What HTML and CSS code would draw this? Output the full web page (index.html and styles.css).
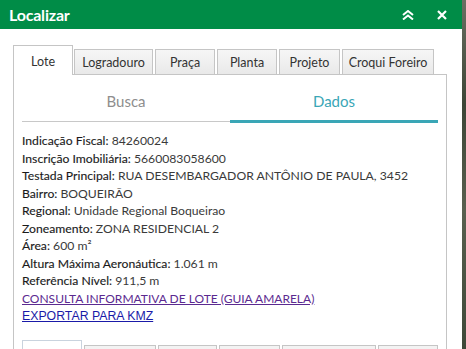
FILE: index.html
```html
<!DOCTYPE html>
<html lang="pt">
<head>
<meta charset="utf-8">
<title>Localizar</title>
<link rel="stylesheet" href="styles.css">
</head>
<body>
<div class="map-edge"></div>
<div class="panel">
  <div class="header">
    <span class="title">Localizar</span>
    <span class="actions">
      <svg class="icon" width="14" height="10" viewBox="0 0 14 10"><path d="M2 5 L7 1 L12 5 M2 9.5 L7 5.5 L12 9.5" fill="none" stroke="#fff" stroke-width="2"/></svg>
      <svg class="icon close" width="10" height="10" viewBox="0 0 10 10"><path d="M1 1 L9 9 M9 1 L1 9" fill="none" stroke="#fff" stroke-width="2.2"/></svg>
    </span>
  </div>
  <div class="body">
    <div class="tabs">
      <div class="tab active">Lote</div>
      <div class="tab w-log">Logradouro</div>
      <div class="tab w-praca">Praça</div>
      <div class="tab w-planta">Planta</div>
      <div class="tab w-proj">Projeto</div>
      <div class="tab w-croqui">Croqui Foreiro</div>
    </div>
    <div class="tab-content">
      <div class="subtabs">
        <div class="subtab">Busca</div>
        <div class="subtab selected">Dados</div>
      </div>
      <div class="data">
        <div class="row"><span class="lbl">Indicação Fiscal:</span> 84260024</div>
        <div class="row"><span class="lbl">Inscrição Imobiliária:</span> 5660083058600</div>
        <div class="row"><span class="lbl">Testada Principal:</span> RUA DESEMBARGADOR ANTÔNIO DE PAULA, 3452</div>
        <div class="row"><span class="lbl">Bairro:</span> BOQUEIRÃO</div>
        <div class="row"><span class="lbl">Regional:</span> Unidade Regional Boqueirao</div>
        <div class="row"><span class="lbl">Zoneamento:</span> ZONA RESIDENCIAL 2</div>
        <div class="row"><span class="lbl">Área:</span> 600 m²</div>
        <div class="row"><span class="lbl">Altura Máxima Aeronáutica:</span> 1.061 m</div>
        <div class="row"><span class="lbl">Referência Nível:</span> 911,5 m</div>
        <div class="row"><a class="link visited" href="#">CONSULTA INFORMATIVA DE LOTE (GUIA AMARELA)</a></div>
        <div class="row"><a class="link kmz" href="#">EXPORTAR PARA KMZ</a></div>
      </div>
      <div class="tabs2">
        <div class="t2 active"></div>
        <div class="t2 b1"></div>
        <div class="t2 b2"></div>
        <div class="t2 b3"></div>
        <div class="t2 b4"></div>
        <div class="t2 b5"></div>
      </div>
    </div>
  </div>
</div>
</body>
</html>
```
FILE: styles.css
```css
html, body {
  margin: 0;
  padding: 0;
  height: 100%;
  overflow: hidden;
}
body {
  background: #4b5243;
  font-family: Lato, "Open Sans", sans-serif;
  position: relative;
}
.map-edge {
  position: absolute;
  right: 0;
  top: 0;
  width: 4px;
  height: 100%;
  background: linear-gradient(#6b6f62, #3d4536 30%, #59604f 60%, #3e4838);
}
.panel {
  width: 462px;
  height: 349px;
  background: #fff;
  overflow: hidden;
}
.header {
  height: 29px;
  background: #008c47;
  display: flex;
  align-items: center;
  justify-content: space-between;
  padding: 0 15px 0 9px;
}
.title {
  color: #fff;
  font-weight: 700;
  font-size: 16px;
  letter-spacing: -0.2px;
}
.actions {
  display: flex;
  align-items: center;
  gap: 22px;
}
.icon { display: block; }
.body {
  padding: 16px 15px 0 13px;
}
.tabs {
  display: flex;
  align-items: flex-end;
  gap: 2px;
  height: 29px;
  position: relative;
  z-index: 1;
}
.tab {
  box-sizing: border-box;
  height: 25px;
  border: 1px solid #c5c5c5;
  border-bottom: none;
  background: linear-gradient(#f6f6f6, #e9e9e9);
  font-size: 12.5px;
  color: #333;
  display: flex;
  align-items: center;
  justify-content: center;
}
.tab.active {
  width: 60px;
  height: 30px;
  background: #fff;
  border-color: #c5c5c5;
  margin-right: -1px;
  margin-bottom: -1px;
  padding-top: 2px;
}
.w-log { width: 79px; }
.w-praca { width: 60px; }
.w-planta { width: 60px; }
.w-proj { width: 61px; }
.w-croqui { width: 92px; }
.tab-content {
  border: 1px solid #c5c5c5;
  border-bottom: none;
  padding: 0 8px;
  height: 300px;
}
.subtabs {
  display: flex;
  padding-top: 16px;
}
.subtab {
  flex: 1;
  text-align: center;
  font-size: 15px;
  color: #8e8e8e;
  line-height: 20px;
  padding-bottom: 10px;
  border-bottom: 1px solid #c8c8c8;
  margin-bottom: 1px;
}
.subtab.selected {
  color: #3aa6b6;
  border-bottom: 3px solid #3aa6b6;
  margin-bottom: 0;
  padding-bottom: 9px;
}
.data {
  padding-top: 9px;
}
.row {
  font-size: 12.2px;
  line-height: 17.5px;
  color: #3a3a3a;
  white-space: nowrap;
}
.lbl {
  color: #1a1a1a;
  -webkit-text-stroke: 0.12px #1a1a1a;
}
.link {
  font-size: 12px;
}
.link.visited { color: #5b2a90; }
.link.kmz {
  color: #1a1aa8;
  font-family: "Liberation Sans", Arial, sans-serif;
  font-size: 12.3px;
}
.tabs2 {
  display: flex;
  align-items: flex-end;
  gap: 2px;
  margin-top: 14px;
  height: 10px;
}
.t2 {
  height: 4px;
  border: 1px solid #c5c5c5;
  border-bottom: none;
  background: #f3f3f3;
}
.t2.active {
  height: 9px;
  width: 59px;
  background: #fff;
  border-color: #c9d3de;
}
.b1 { width: 70px; }
.b2 { width: 58px; }
.b3 { width: 59px; }
.b4 { width: 93px; }
.b5 { width: 59px; }
```
